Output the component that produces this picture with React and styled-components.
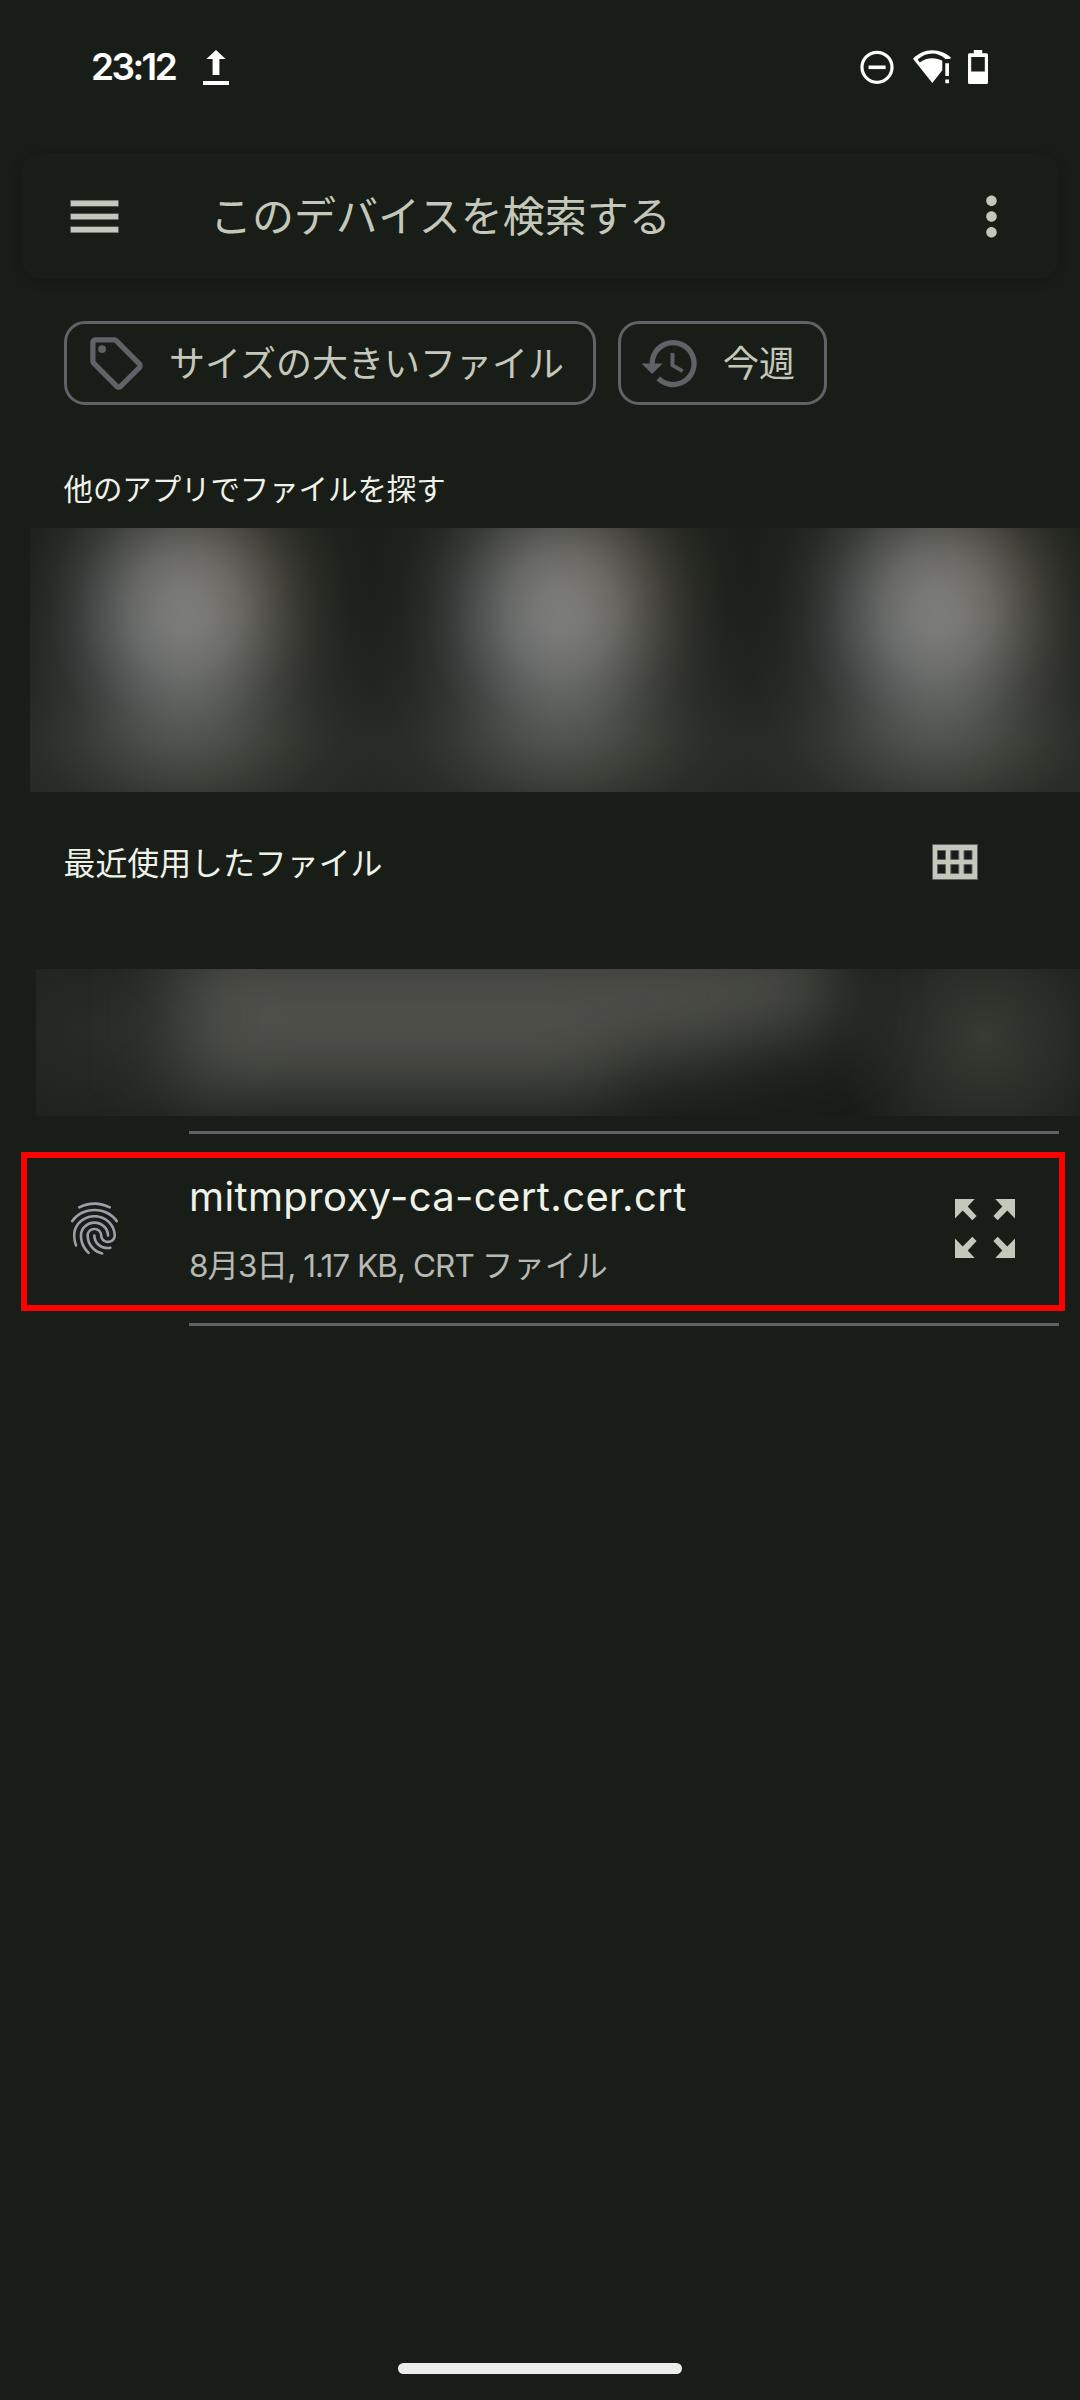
import React from "react";
import styled, { createGlobalStyle } from "styled-components";
import { MdMenu, MdMoreVert, MdHistory, MdFingerprint } from "react-icons/md";

const color = {
  bg: "#191d17",
  text: "#eff2e8",
  soft: "#c4c8ba",
  muted: "#b7b9b4",
  outline: "#5f6368",
  print: "#9aa0a9",
};

const GlobalStyle = createGlobalStyle`
  * { box-sizing: border-box; }
  body {
    margin: 0;
    background: ${color.bg};
    font-family: Inter, "Noto Sans CJK JP", sans-serif;
  }
`;

const Screen = styled.div`
  width: 1080px;
  height: 2400px;
  overflow: hidden;
  display: flex;
  flex-direction: column;
  background: ${color.bg};
  color: ${color.text};
`;

const StatusBar = styled.header`
  height: 134px;
  flex: none;
  display: flex;
  align-items: center;
  justify-content: space-between;
  padding: 0 92px 0 91px;
  color: #fff;
`;

const StatusGroup = styled.div`
  display: flex;
  align-items: center;
  gap: ${(p) => p.$gap}px;
`;

const Clock = styled.span`
  font-size: 37px;
  line-height: 48px;
  font-weight: 600;
  letter-spacing: -2.6px;
  width: 86px;
  white-space: nowrap;
`;

const Glyph = styled.svg`
  display: block;
  flex: none;
  width: ${(p) => p.$w}px;
  height: ${(p) => p.$h}px;
`;

const SearchBar = styled.div`
  flex: none;
  height: 126px;
  margin: 19px 21px 0;
  padding: 0 36px 0 42px;
  display: flex;
  align-items: center;
  border-radius: 21px;
  box-shadow: 0 2px 8px 1px rgba(22, 20, 16, 0.6);
  color: ${color.soft};
`;

const SearchText = styled.span`
  flex: 1;
  margin-left: 84px;
  padding-top: 1px;
  font-size: 42px;
  line-height: 62px;
`;

const EdgedMenu = styled(MdMenu)`
  path[d^="M3"] {
    paint-order: stroke;
    stroke: ${color.outline};
    stroke-width: 0.5px;
  }
`;

const Chips = styled.div`
  flex: none;
  display: flex;
  gap: 22px;
  margin: 42px 0 0 64px;
`;

const Chip = styled.div`
  width: ${(p) => p.$width}px;
  height: 84px;
  flex: none;
  display: flex;
  align-items: center;
  gap: 21px;
  padding-left: 18px;
  border: 3px solid ${color.outline};
  border-radius: 21px;
  color: ${color.outline};
`;

const ChipLabel = styled.span`
  padding-top: 2px;
  color: ${color.soft};
  font-size: 36px;
  line-height: 52px;
  white-space: nowrap;
`;

const SectionHeader = styled.div`
  flex: none;
  height: ${(p) => p.$height}px;
  padding: 0 102px 0 63.5px;
  display: flex;
  justify-content: space-between;
  align-items: center;
  margin-top: ${(p) => p.$top}px;
`;

const SectionTitle = styled.h2`
  margin: 0;
  padding-top: ${(p) => p.$drop}px;
  font-size: ${(p) => p.$size}px;
  line-height: 46px;
  font-weight: 400;
`;

const falloff = [
  [1, 0],
  [0.96, 12],
  [0.8, 27],
  [0.54, 42],
  [0.3, 56],
  [0.13, 70],
  [0.04, 84],
  [0, 100],
];

const glow = (w, h, x, y, [r, g, b]) =>
  `radial-gradient(${w}px ${h}px at ${x}px ${y}px, ${falloff
    .map(([k, at]) => `rgb(${r * k}, ${g * k}, ${b * k}) ${at}%`)
    .join(", ")})`;

const appGlow = (x) =>
  [
    glow(196, 216, x + 2, 82, [108, 0, 0]),
    glow(196, 217, x, 84, [0, 106, 0]),
    glow(196, 218, x - 3, 86, [0, 0, 106]),
    glow(230, 120, x, 224, [26, 27, 23]),
  ].join(", ");

const AppStrip = styled.div`
  flex: none;
  height: 264px;
  margin: 16px 0 0 30px;
  background-color: #1b1e19;
  background-blend-mode: screen;
  background-image: ${[155, 531, 907].map(appGlow).join(", ")},
    linear-gradient(#000 30%, #0d0c0c 80%, #0b0a0a 100%);
`;

const HiddenRow = styled.div`
  flex: none;
  height: 147px;
  margin: 76px 0 0 36px;
  overflow: hidden;
  background:
    radial-gradient(150px 150px at 949px 68px, rgba(120, 121, 112, 0.32), rgba(120, 121, 112, 0.17) 50%, rgba(120, 121, 112, 0) 100%),
    radial-gradient(200px 130px at 75px 62px, rgba(100, 108, 114, 0.2), rgba(100, 108, 114, 0.11) 55%, rgba(100, 108, 114, 0) 100%);
`;

const HiddenLines = styled.div`
  width: 660px;
  margin-left: 140px;
  margin-top: -28px;
  filter: blur(38px);
`;

const HiddenLine = styled.div`
  width: ${(p) => p.$width}px;
  height: ${(p) => p.$height}px;
  background: #4f504a;
`;

const Divider = styled.hr`
  flex: none;
  width: 870px;
  height: 3px;
  margin: ${(p) => p.$top}px 0 0 189px;
  border: 0;
  background: ${color.outline};
`;

const FileRow = styled.div`
  flex: none;
  height: 159px;
  margin: 18px 15px 0 21px;
  padding: 0 44px 6px 36px;
  display: flex;
  align-items: center;
  border: 6px solid #ff0000;
`;

const FileInfo = styled.div`
  flex: 1;
  margin-left: 63px;
  display: flex;
  flex-direction: column;
  gap: 20px;
`;

const FileName = styled.span`
  font-size: 40px;
  line-height: 54px;
  letter-spacing: 0.37px;
  white-space: nowrap;
`;

const FileMeta = styled.span`
  color: ${color.muted};
  font-size: 31.5px;
  line-height: 44px;
  white-space: nowrap;
`;

const Tight = styled.span`
  letter-spacing: -0.95px;
`;

const NavPill = styled.div`
  flex: none;
  width: 284px;
  height: 11px;
  margin: auto auto 26px;
  border-radius: 6px;
  background: #ececec;
`;

const UploadIcon = () => (
  <Glyph $w={26} $h={36} viewBox="0 0 26 36" fill="currentColor">
    <path d="M13 1 22.6 10H16.4V26H9.6V10H3.4ZM0 32H26V36H0Z" />
  </Glyph>
);

const DoNotDisturbIcon = () => (
  <Glyph $w={36} $h={34} viewBox="0 0 36 34" fill="none" stroke="currentColor">
    <circle cx="17" cy="17.3" r="15" strokeWidth="3.2" />
    <path d="M8.6 17.3H25.6" strokeWidth="3.6" />
  </Glyph>
);

const WifiAlertIcon = () => (
  <Glyph $w={38} $h={34} viewBox="0 0 38 34" fill="currentColor">
    <path
      fillRule="evenodd"
      d="M0 8.8C5 3.200 12 .2 19.300 .2C26.500 .2 33 3 38 7.600L37 9H32.500C28.500 5.500 24 3.600 19.300 3.600C13.900 3.600 9 5.900 4.700 9.600L6.800 12.500C10.300 9.800 14.600 8.300 19.300 8.300C23 8.300 26.500 9.200 29.300 10.700V20.300L19.300 33Z"
    />
    <path d="M32.300 13.200H36V26H32.300ZM32.300 29.500H36V33.200H32.300Z" />
  </Glyph>
);

const BatteryIcon = () => (
  <Glyph $w={20} $h={34} viewBox="0 0 20 34" fill="currentColor">
    <path
      fillRule="evenodd"
      d="M5.800 0H14.200V3.200H18.500Q20 3.200 20 4.700V32.500Q20 34 18.500 34H1.500Q0 34 0 32.500V4.700Q0 3.200 1.500 3.200H5.800ZM3.200 7V21.500H16.800V7Z"
    />
  </Glyph>
);

const TagIcon = () => (
  <Glyph $w={63} $h={63} viewBox="0 0 24 24" fill="currentColor">
    <path d="M21.410 11.410 12.580 2.580C12.210 2.210 11.700 2 11.170 2H4C2.900 2 2 2.900 2 4V11.170C2 11.700 2.210 12.210 2.590 12.580L11.420 21.410C12.200 22.190 13.470 22.190 14.250 21.410L21.420 14.240C22.200 13.460 22.200 12.200 21.410 11.410ZM12.830 20 4 11.170V4H11.170L20 12.830Z" />
    <circle cx="6.500" cy="6.500" r="1.500" />
  </Glyph>
);

const GridIcon = () => (
  <Glyph $w={46} $h={36} viewBox="0 0 46 36">
    <path
      fillRule="evenodd"
      fill={color.soft}
      stroke={color.outline}
      strokeWidth="1"
      d="M.5 .5H45.500V35.500H.5ZM5.500 6.500V15.500H13.500V6.500ZM18.800 6.500V15.500H26.800V6.500ZM32 6.500V15.500H40V6.500ZM5.500 20.500V29.500H13.500V20.500ZM18.800 20.500V29.500H26.800V20.500ZM32 20.500V29.500H40V20.500Z"
    />
  </Glyph>
);

const arrow = "0,0 19.7,0 12.7,7.600 21.600,17 17.300,21.200 7.700,11.500 0,19.600";

const ExpandIcon = () => (
  <Glyph $w={60} $h={59} viewBox="0 0 60 59" fill={color.soft}>
    <polygon points={arrow} />
    <polygon points={arrow} transform="translate(60 0) scale(-1 1)" />
    <polygon points={arrow} transform="translate(0 59) scale(1 -1)" />
    <polygon points={arrow} transform="translate(60 59) scale(-1 -1)" />
  </Glyph>
);

export default function App() {
  return (
    <Screen lang="ja">
      <GlobalStyle />
      <StatusBar>
        <StatusGroup $gap={26}>
          <Clock>23:12</Clock>
          <UploadIcon />
        </StatusGroup>
        <StatusGroup $gap={17}>
          <DoNotDisturbIcon />
          <WifiAlertIcon />
          <BatteryIcon />
        </StatusGroup>
      </StatusBar>

      <SearchBar>
        <EdgedMenu size={63} />
        <SearchText>このデバイスを検索する</SearchText>
        <MdMoreVert size={63} />
      </SearchBar>

      <Chips>
        <Chip $width={532}>
          <TagIcon />
          <ChipLabel>サイズの大きいファイル</ChipLabel>
        </Chip>
        <Chip $width={209}>
          <MdHistory size={63} />
          <ChipLabel>今週</ChipLabel>
        </Chip>
      </Chips>

      <SectionHeader $height={46} $top={61}>
        <SectionTitle $size={29.4} $drop={2}>
          他のアプリでファイルを探す
        </SectionTitle>
      </SectionHeader>
      <AppStrip />

      <SectionHeader $height={63} $top={38}>
        <SectionTitle $size={31.9} $drop={4}>
          最近使用したファイル
        </SectionTitle>
        <GridIcon />
      </SectionHeader>
      <HiddenRow>
        <HiddenLines>
          <HiddenLine $width={660} $height={92} />
          <HiddenLine $width={560} $height={24} />
          <HiddenLine $width={440} $height={36} />
        </HiddenLines>
      </HiddenRow>
      <Divider $top={15} />

      <FileRow>
        <MdFingerprint size={63} color={color.print} />
        <FileInfo>
          <FileName>mitmproxy-ca-cert.cer.crt</FileName>
          <FileMeta>
            <Tight>8月3日, 1.17 KB, CRT </Tight>
            ファイル
          </FileMeta>
        </FileInfo>
        <ExpandIcon />
      </FileRow>
      <Divider $top={12} />

      <NavPill />
    </Screen>
  );
}
